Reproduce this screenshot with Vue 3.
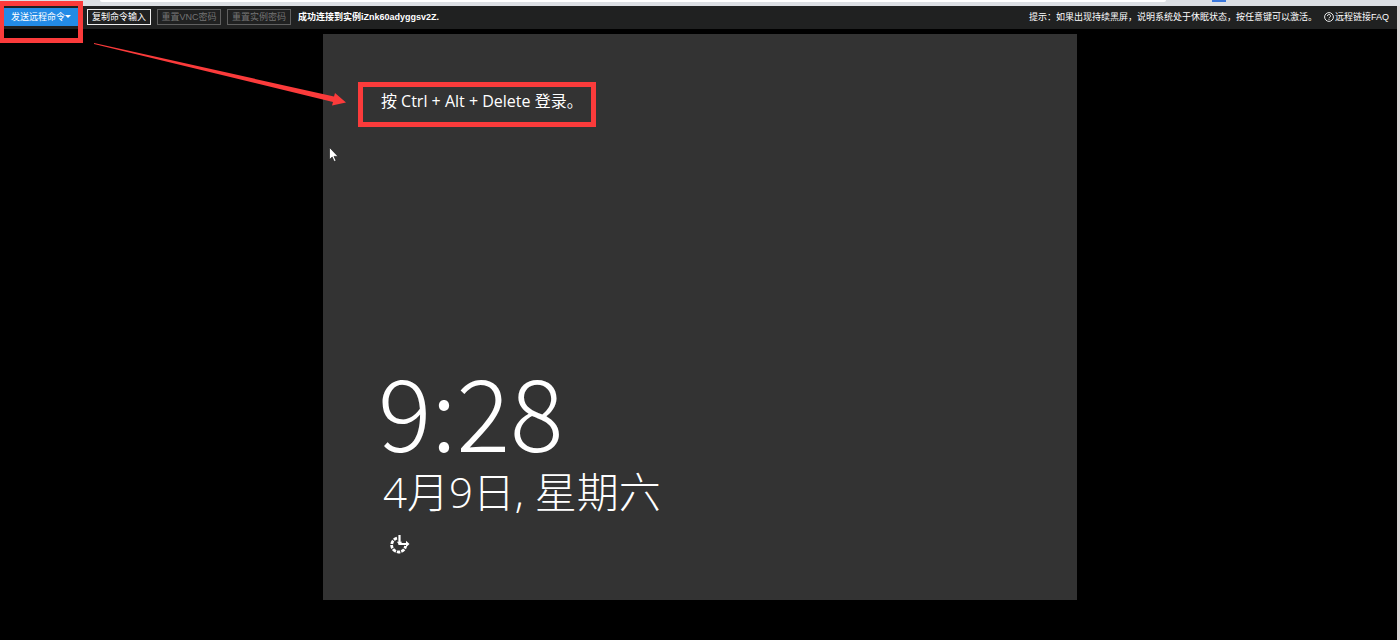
<script setup>
const notice = '成功连接到实例iZnk60adyggsv2Z.'
const hint = '提示：如果出现持续黑屏，说明系统处于休眠状态，按任意键可以激活。'
</script>

<template>
  <div class="page">
    <div class="browser">
      <div class="address"></div>
      <div class="extension"></div>
    </div>
    <div class="body">
      <div class="main">
        <header class="toolbar">
          <div class="command">
            <button class="btn primary" type="button">发送远程命令<span class="caret"></span></button>
            <div class="frame frame-command"></div>
          </div>
          <button class="btn" type="button">复制命令输入</button>
          <button class="btn" type="button" disabled>重置VNC密码</button>
          <button class="btn" type="button" disabled>重置实例密码</button>
          <strong class="notice">{{ notice }}</strong>
          <span class="hint">{{ hint }}</span>
          <a class="faq" href="#">
            <svg width="10" height="10" viewBox="0 0 10 10" fill="none" stroke="currentColor" aria-hidden="true">
              <circle cx="5" cy="5" r="4.4" stroke-width=".9" />
              <path d="M3.5 4a1.5 1.5 0 1 1 2.3 1.2Q5 5.7 5 6.3M5 7.1v.9" stroke-width=".9" />
            </svg>
            <span>远程链接FAQ</span>
          </a>
        </header>
        <main class="stage">
          <section class="screen">
            <div class="login">
              <p class="login-text">按 Ctrl + Alt + Delete 登录。</p>
              <div class="frame frame-login"></div>
            </div>
            <div class="clock">
              <div class="time">9:28</div>
              <div class="date">4月9日, 星期六</div>
              <svg class="ease" width="20" height="20" viewBox="0 0 20 20" fill="none" stroke="#fff" aria-hidden="true">
                <path d="M7 4.2A7 7 0 1 0 15.6 12" stroke-width="2.8" stroke-dasharray="3.5 1" />
                <path d="M9.5 1v9H17" stroke-width="2.2" />
                <path d="M16 6.8 19.5 10 16 13.2z" fill="#fff" stroke="none" />
                <path d="M6.8 7.8h5.4L9.5 11z" fill="#fff" stroke="none" />
              </svg>
            </div>
            <svg class="arrow" width="254" height="64" viewBox="0 0 254 64" aria-hidden="true">
              <path d="M1 0 241 53.500 242 50 253 59.500 239 62.500 240 59 1 1Z" fill="#fb3b3b" />
            </svg>
            <svg class="pointer" width="10" height="15" viewBox="0 0 10 15" aria-hidden="true">
              <path d="M.5.5v12l2.700-2.500 2 4.500 1.800-.8-2-4.300H9z" fill="#fff" stroke="#111" stroke-width=".6" />
            </svg>
          </section>
        </main>
      </div>
      <div class="scrollbar"></div>
    </div>
  </div>
</template>

<style>
html,
body {
  background: #000;
}
</style>

<style scoped>
.page {
  display: flex;
  flex-direction: column;
  min-height: 100vh;
  overflow: hidden;
  background: #000;
  color: #fff;
  font-family: "Liberation Sans", "Noto Sans CJK SC", sans-serif;
}
.browser {
  display: flex;
  align-items: flex-start;
  height: 6px;
  padding-left: 100px;
  background: #dcdfe3;
}
.address {
  width: 82%;
  height: 2px;
  border-radius: 0 0 4px 4px;
  background: #fff;
}
.extension {
  width: 14px;
  height: 2px;
  margin-left: 46px;
  background: #3b78dc;
}
.body {
  display: flex;
  flex: 1;
}
.main {
  display: flex;
  flex: 1;
  flex-direction: column;
}
.scrollbar {
  width: 3px;
  background: #d8d4d4;
}
.toolbar {
  display: flex;
  align-items: center;
  box-sizing: border-box;
  height: 23px;
  padding: 0 8px 2px 4px;
  gap: 6px;
  background: #202121;
  font-size: 9px;
  line-height: 12px;
  white-space: nowrap;
}
.command {
  position: relative;
  display: flex;
  margin-right: 3px;
}
.btn {
  box-sizing: border-box;
  width: 64px;
  height: 16px;
  padding: 0;
  border: 1px solid #eee;
  background: transparent;
  color: #fff;
  font: inherit;
}
.btn:disabled {
  border-color: #606060;
  color: #747474;
}
.primary {
  display: flex;
  align-items: center;
  justify-content: center;
  width: 74px;
  height: 18px;
  border: 0;
  background: #238be6;
}
.caret {
  border: 3px solid transparent;
  border-top-color: #fff;
  border-bottom: 0;
}
.frame {
  position: absolute;
  box-sizing: border-box;
  border: 5px solid #fb3b3b;
  pointer-events: none;
}
.frame-command {
  top: -7px;
  left: -5px;
  width: 84px;
  height: 42px;
}
.notice {
  margin-left: 1px;
}
.hint {
  margin-left: auto;
}
.faq {
  display: flex;
  align-items: center;
  gap: 1px;
  margin-left: 1px;
  color: #fff;
  text-decoration: none;
}
.stage {
  flex: 1;
  padding: 5px 0 40px 3px;
}
.screen {
  position: relative;
  display: flex;
  flex-direction: column;
  justify-content: space-between;
  box-sizing: border-box;
  width: 54.1%;
  aspect-ratio: 4 / 3;
  margin: 0 auto;
  padding: 48px 35px 46px;
  background: #333;
}
.login {
  position: relative;
  align-self: flex-start;
  padding: 7px 13px 14px 23px;
}
.login-text {
  margin: 0;
  font-family: "Open Sans", "Noto Sans CJK SC", sans-serif;
  font-size: 16px;
  line-height: 24px;
  white-space: nowrap;
}
.frame-login {
  inset: 0;
}
.clock {
  padding-left: 20px;
  font-family: "Noto Sans CJK SC", sans-serif;
  font-weight: 300;
  white-space: nowrap;
}
.time {
  margin-bottom: 9px;
  font-size: 100px;
  line-height: 100px;
}
.date {
  padding-left: 5px;
  font-family: "Open Sans", "Noto Sans CJK SC", sans-serif;
  font-size: 42px;
  line-height: 48px;
}
.ease {
  display: block;
  margin: 18px 0 0 12px;
}
.arrow {
  position: absolute;
  top: 9px;
  left: -230px;
}
.pointer {
  position: absolute;
  top: 113px;
  left: 6px;
}
</style>
